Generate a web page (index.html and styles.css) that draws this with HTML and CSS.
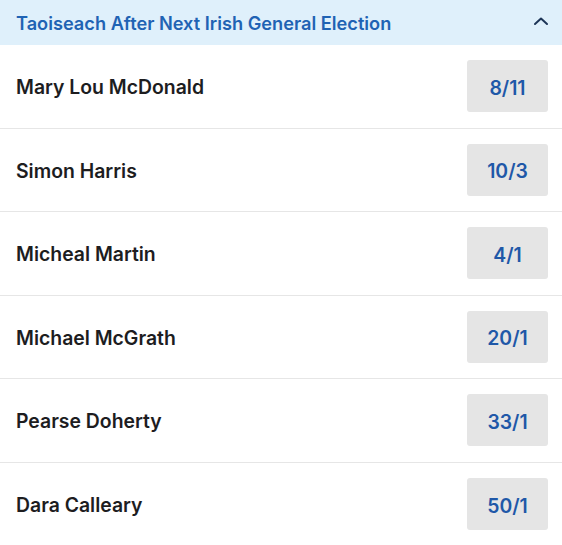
FILE: index.html
```html
<!DOCTYPE html>
<html>
<head>
<meta charset="utf-8">
<link rel="stylesheet" href="styles.css">
</head>
<body>
<div class="market">
  <div class="market-header">
    <span class="market-title">Taoiseach After Next Irish General Election</span>
    <svg class="chevron" width="16" height="10" viewBox="0 0 16 10"><polyline points="2,8 8,2.5 14,8" fill="none" stroke="#1d3557" stroke-width="2" stroke-linecap="round" stroke-linejoin="round"/></svg>
  </div>
  <div class="row"><span class="name">Mary Lou McDonald</span><span class="odds">8/11</span></div>
  <div class="row"><span class="name">Simon Harris</span><span class="odds">10/3</span></div>
  <div class="row"><span class="name">Micheal Martin</span><span class="odds">4/1</span></div>
  <div class="row"><span class="name">Michael McGrath</span><span class="odds">20/1</span></div>
  <div class="row"><span class="name">Pearse Doherty</span><span class="odds">33/1</span></div>
  <div class="row last"><span class="name">Dara Calleary</span><span class="odds">50/1</span></div>
</div>
</body>
</html>
```
FILE: styles.css
```css
html, body {
  margin: 0;
  padding: 0;
  background: #ffffff;
}
body {
  font-family: Inter, "Noto Sans", sans-serif;
}
.market {
  width: 562px;
}
.market-header {
  height: 45px;
  background: #dff0fb;
  display: flex;
  align-items: center;
  justify-content: space-between;
  padding: 0 13px 0 16px;
}
.market-title {
  color: #1f63b4;
  font-size: 18.2px;
  font-weight: 600;
}
.chevron {
  display: block;
  margin-top: -3px;
}
.row {
  display: flex;
  align-items: center;
  justify-content: space-between;
  height: 83.5px;
  box-sizing: border-box;
  border-bottom: 1px solid #e6e6e6;
  padding: 0 14px 0 16px;
}
.row.last {
  border-bottom: none;
}
.name {
  font-size: 19.4px;
  font-weight: 600;
  color: #1d1d1f;
  padding-top: 2px;
}
.odds {
  width: 81px;
  height: 52px;
  border-radius: 3px;
  background: #e5e5e5;
  display: flex;
  align-items: center;
  justify-content: center;
  color: #1f58a8;
  font-size: 19.4px;
  font-weight: 600;
  padding-top: 3px;
  box-sizing: border-box;
}
```
